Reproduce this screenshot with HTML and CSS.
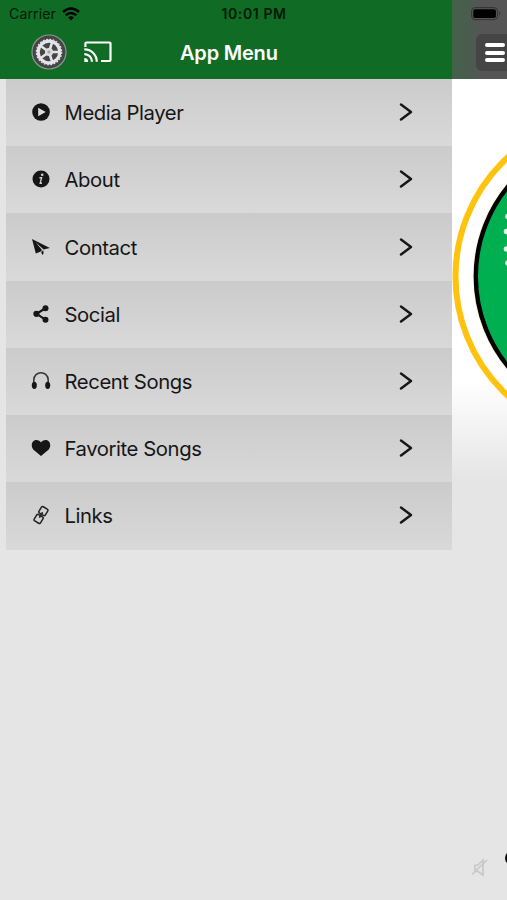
FILE: index.html
```html
<!DOCTYPE html>
<html lang="en">
<head>
<meta charset="utf-8">
<title>App Menu</title>
<link rel="stylesheet" href="styles.css">
</head>
<body>
<div class="screen">
  <section class="drawer">
    <header class="header">
      <div class="status">
        <span class="carrier">Carrier</span>
        <svg class="wifi" width="18" height="14" viewBox="0 0 18 14"><g fill="none" stroke="#000" stroke-width="2.5"><path d="M1 5Q9-2 17 5"/><path d="M3.8 8.3Q9 3.8 14.2 8.3"/></g><path d="M6.2 10.5Q9 8.2 11.8 10.5L9 13.5Z"/></svg>
        <span class="time">10:01 PM</span>
      </div>
      <div class="toolbar">
        <svg class="gear" width="36" height="36" viewBox="-18 -18 36 36">
          <circle r="17" fill="#454447" stroke="#8d9890" stroke-width="1.2"/>
          <circle r="10.8" fill="none" stroke="#e4e4e6" stroke-width="3.2"/>
          <circle r="12.7" fill="none" stroke="#e4e4e6" stroke-width="1.2" stroke-dasharray="1.8 1.525"/>
          <path d="M0 0H11M0 0L3.4 10.5M0 0L-8.9 6.5M0 0L-8.9-6.5M0 0L3.4-10.5" stroke="#e4e4e6" stroke-width="2.5"/>
          <circle r="4" fill="#dedee0"/><circle r="1.7" fill="#aaa"/>
        </svg>
        <svg class="cast" width="28" height="22" viewBox="0 0 28 22" fill="none" stroke="#fff" stroke-width="2.2"><path d="M1.4 6V2.5Q1.4 1.5 2.4 1.5H25.5Q26.5 1.5 26.5 2.5V19Q26.5 20 25.5 20H17"/><path d="M.3 8.4A12 12 0 0 1 12.7 20.8M.3 13.1A7.6 7.6 0 0 1 8 20.8"/><path d="M.3 17A4 4 0 0 1 4.2 20.9H.3Z" fill="#fff" stroke="none"/></svg>
        <h1 class="title">App Menu</h1>
      </div>
    </header>
    <nav class="menu">
      <a class="item"><svg class="icon" viewBox="0 0 20 20"><circle cx="10" cy="10" r="8.8"/><path d="M7.2 5.8L14.7 10L7.2 14.2Z" fill="#ddd"/></svg><span class="label">Media Player</span><svg class="chevron" viewBox="0 0 14 18"><path d="M2 1.5L12 9L2 16.5"/></svg></a>
      <a class="item"><svg class="icon" viewBox="0 0 20 20"><circle cx="10" cy="10" r="8.5"/><circle cx="11.2" cy="5.7" r="1.3" fill="#ccc"/><path d="M8.4 8.7H10.6L9.2 14.2H11" fill="none" stroke="#ccc" stroke-width="1.4"/></svg><span class="label">About</span><svg class="chevron" viewBox="0 0 14 18"><path d="M2 1.5L12 9L2 16.5"/></svg></a>
      <a class="item"><svg class="icon" viewBox="0 0 20 20"><path d="M1 2L18.9 11L12.6 12.4L4.4 5L11 12.9L9.8 14.4L4.8 16.6ZM10.2 15L12.2 13.3L12.6 16.5L11.2 18Z"/></svg><span class="label">Contact</span><svg class="chevron" viewBox="0 0 14 18"><path d="M2 1.5L12 9L2 16.5"/></svg></a>
      <a class="item"><svg class="icon" viewBox="0 0 20 20"><path d="M14.5 4.3L5.5 9.8L14.5 15.7" fill="none" stroke="#161616" stroke-width="2.2"/><circle cx="14.5" cy="4.3" r="3"/><circle cx="5.4" cy="9.8" r="3.1"/><circle cx="14.5" cy="15.7" r="3"/></svg><span class="label">Social</span><svg class="chevron" viewBox="0 0 14 18"><path d="M2 1.5L12 9L2 16.5"/></svg></a>
      <a class="item"><svg class="icon" viewBox="0 0 20 20"><path d="M2.8 13V9C2.8-.6 17.2-.6 17.2 9V13" fill="none" stroke="#333" stroke-width="1.5"/><ellipse cx="3.3" cy="14.3" rx="2.5" ry="3.6"/><ellipse cx="16.7" cy="14.3" rx="2.5" ry="3.6"/></svg><span class="label">Recent Songs</span><svg class="chevron" viewBox="0 0 14 18"><path d="M2 1.5L12 9L2 16.5"/></svg></a>
      <a class="item"><svg class="icon" viewBox="0 0 20 20"><path d="M10 18L2.2 11.4C-.9 7.4 1.4 2 5.2 2C7.4 2 9.2 3 10 4.6C10.8 3 12.6 2 14.8 2C18.6 2 20.9 7.4 17.8 11.4Z"/></svg><span class="label">Favorite Songs</span><svg class="chevron" viewBox="0 0 14 18"><path d="M2 1.5L12 9L2 16.5"/></svg></a>
      <a class="item"><svg class="icon" viewBox="0 0 20 20"><g fill="none" stroke="#222" stroke-width="1.5" transform="rotate(31 10 10)"><rect x="6.3" y="1.7" width="7.4" height="7.4" rx="1.5"/><rect x="6.3" y="10.9" width="7.4" height="7.4" rx="1.5"/><path d="M10 6.8V13.2"/></g></svg><span class="label">Links</span><svg class="chevron" viewBox="0 0 14 18"><path d="M2 1.5L12 9L2 16.5"/></svg></a>
    </nav>
  </section>
  <aside class="player">
    <div class="player-bar">
      <svg class="battery" width="32" height="14" viewBox="0 0 32 14"><rect x=".6" y=".6" width="26" height="12" rx="3.5" fill="none" stroke="#333" stroke-width="1"/><rect x="2.3" y="2.2" width="22.6" height="8.8" rx="1.8"/><path d="M28.3 4.5Q30.3 6.5 28.3 8.5Z" fill="#333"/></svg>
      <div class="burger"><i></i><i></i><i></i></div>
    </div>
    <svg class="artwork" width="55" height="400" viewBox="452 79 55 400">
      <circle cx="617.5" cy="276.5" r="162" fill="#fff" stroke="#ffc20e" stroke-width="6"/>
      <circle cx="617.5" cy="276.5" r="145" fill="#fff3cf"/>
      <circle cx="617.5" cy="276.5" r="141.7" fill="#00af50" stroke="#000" stroke-width="4.4"/>
      <g fill="#e6f8ed"><circle cx="508" cy="216.5" r="2.8"/><circle cx="506.5" cy="231.5" r="2.8"/><circle cx="506.5" cy="249" r="2.8"/><circle cx="508" cy="263" r="2.8"/></g>
    </svg>
    <div class="controls">
      <svg width="18" height="22" viewBox="0 0 18 22" fill="none" stroke="#c8c8c8" stroke-width="1.7"><path d="M4 8.5L7 8L12 3V18L7 14.5H4ZM1 17.5L16 3"/></svg>
      <span class="knob"></span>
    </div>
  </aside>
</div>
</body>
</html>
```
FILE: styles.css
```css
* { box-sizing: border-box; }
body { margin: 0; font-family: Inter, "Liberation Sans", sans-serif; background: #e5e5e5; }
.screen { display: flex; width: 507px; height: 900px; overflow: hidden; }
.drawer { width: 452px; flex: none; }
.header { height: 79px; background: #106b24; }
.status { display: flex; height: 27px; align-items: center; padding-left: 9px; color: #001a05; }
.carrier { width: 53px; font-size: 14px; letter-spacing: .15px; white-space: nowrap; }
.wifi { flex: none; }
.time { margin-left: 141.5px; font-size: 14px; font-weight: 600; letter-spacing: .6px; white-space: nowrap; }
.toolbar { display: flex; height: 50px; align-items: center; padding-left: 31px; }
.cast { margin-left: 17px; }
.title { margin: 1px 0 0 68px; font-size: 20px; font-weight: 600; color: #fff; letter-spacing: -.2px; white-space: nowrap; }
.menu { margin-left: 6px; height: 470.5px; display: grid; grid-template-rows: repeat(7, 1fr); }
.item { display: flex; align-items: center; padding: 0 39px 1px 25px; background: linear-gradient(#cbcbcb, #d9d9d9); color: #161616; }
.icon { width: 20px; height: 20px; margin-left: -.5px; fill: #161616; }
.label { flex: 1; margin: 1px 0 0 14px; font-size: 20.3px; letter-spacing: -.42px; }
.chevron { width: 14px; height: 18px; fill: none; stroke: #161616; stroke-width: 2.4; stroke-linecap: round; stroke-linejoin: round; }
.player { display: flex; flex-direction: column; width: 55px; flex: none; overflow: hidden; background: linear-gradient(#fff 0 380px, #e5e5e5 480px); }
.player-bar { height: 79px; flex: none; background: linear-gradient(90deg, #426348, #555 60%); padding: 7px 0 0 19px; overflow: hidden; }
.battery { display: block; }
.burger { display: flex; flex-direction: column; gap: 3.5px; width: 40px; height: 37px; margin: 13px 0 0 5px; padding: 9px 0 0 9px; border-radius: 6px; background: #454545; }
.burger i { width: 20px; height: 4px; flex: none; border-radius: 2px; background: #fff; }
.artwork { display: block; flex: none; }
.controls { display: flex; justify-content: space-between; margin-top: auto; height: 52px; padding: 9px 0 0 19px; }
.knob { width: 18px; height: 16px; flex: none; margin: -7px -16px 0 0; border-radius: 50%; background: #000; }
```
